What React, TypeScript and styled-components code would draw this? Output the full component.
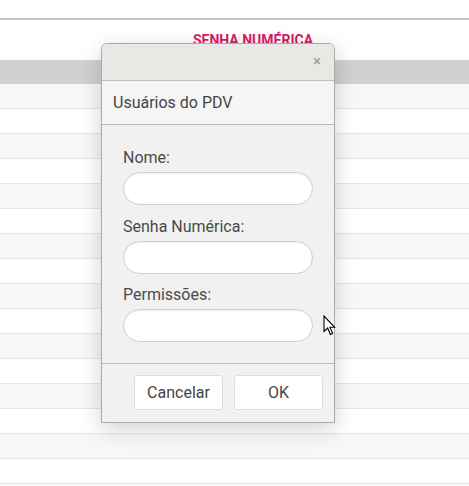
import React from "react";
import styled, { createGlobalStyle } from "styled-components";

const GlobalStyle = createGlobalStyle`
  html, body {
    margin: 0;
    padding: 0;
    background: #ffffff;
    font-family: Roboto, "Liberation Sans", Arial, sans-serif;
  }
  * { box-sizing: border-box; }
`;

const rows = Array.from({ length: 17 }, (_, i) => i);

const App = () => {
  return (
    <Page>
      <GlobalStyle />
      <TopSpace />
      <HeaderRow>
        <HeaderCell>Senha Numérica</HeaderCell>
      </HeaderRow>
      <GrayBar />
      {rows.map((i) => (
        <Row key={i} odd={i % 2 === 0} />
      ))}

      <Dialog>
        <TitleBar>
          <Close>×</Close>
        </TitleBar>
        <Section>Usuários do PDV</Section>
        <Content>
          <Field>
            <Label>Nome:</Label>
            <Input />
          </Field>
          <Field>
            <Label>Senha Numérica:</Label>
            <Input />
          </Field>
          <Field>
            <Label>Permissões:</Label>
            <Input />
          </Field>
        </Content>
        <Footer>
          <Button>Cancelar</Button>
          <Button>OK</Button>
        </Footer>
      </Dialog>

      <Cursor width="14" height="21" viewBox="0 0 14 21">
        <path
          d="M1 1 L1 16.5 L4.6 13 L7.4 19.4 L9.6 18.4 L6.9 12.2 L11.6 12.2 Z"
          fill="#ffffff"
          stroke="#000000"
          strokeWidth="1.1"
          strokeLinejoin="miter"
        />
      </Cursor>
    </Page>
  );
};

export default App;

const Page = styled.div`
  position: relative;
  width: 469px;
  height: 486px;
  overflow: hidden;
  background: #ffffff;
`;
const TopSpace = styled.div`
  height: 20px;
  border-bottom: 2px solid #c8c8c8;
`;
const HeaderRow = styled.div`
  height: 40px;
  display: flex;
  align-items: flex-start;
  padding-left: 192px;
  padding-top: 12px;
`;
const HeaderCell = styled.div`
  width: 122px;
  text-align: center;
  font-size: 14px;
  font-weight: 700;
  text-transform: uppercase;
  color: #d81b67;
  white-space: nowrap;
`;
const GrayBar = styled.div`
  height: 24px;
  background: #d0d0d0;
`;
const Row = styled.div<{ odd?: boolean }>`
  height: 25px;
  background: ${(p) => (p.odd ? "#f7f7f7" : "#ffffff")};
  border-bottom: 1px solid #e6e6e6;
`;
const Dialog = styled.div`
  position: absolute;
  left: 101px;
  top: 43px;
  width: 234px;
  height: 380px;
  display: flex;
  flex-direction: column;
  border: 1px solid #aaaaaa;
  border-radius: 6px 6px 0 0;
  background: #f1f1f1;
  box-shadow: 0 6px 22px rgba(0, 0, 0, 0.18);
  overflow: hidden;
`;
const TitleBar = styled.div`
  height: 37px;
  flex: none;
  background: #e8e8e4;
  border-bottom: 1px solid #bdbdbd;
  display: flex;
  justify-content: flex-end;
  align-items: center;
  padding-right: 13px;
`;
const Close = styled.span`
  font-size: 15px;
  color: #999999;
  line-height: 1;
  margin-top: -1px;
`;
const Section = styled.div`
  height: 44px;
  flex: none;
  background: #f5f5f5;
  border-bottom: 1px solid #b8b8b8;
  display: flex;
  align-items: center;
  padding-left: 11px;
  font-size: 16px;
  color: #444444;
`;
const Content = styled.div`
  flex: none;
  height: 239px;
  background: #f1f1f1;
  border-bottom: 1px solid #bdbdbd;
  padding: 23px 20px 0 21px;
  display: flex;
  flex-direction: column;
  gap: 11.5px;
`;
const Field = styled.div`
  display: flex;
  flex-direction: column;
  gap: 4px;
`;
const Label = styled.label`
  font-size: 16px;
  line-height: 20px;
  color: #4a4a4a;
`;
const Input = styled.div`
  width: 190px;
  height: 33px;
  background: #ffffff;
  border: 1px solid #cfcfcf;
  border-radius: 17px;
  box-shadow: inset 0 1px 2px rgba(0, 0, 0, 0.06);
`;
const Footer = styled.div`
  flex: 1;
  background: #f1f1f1;
  display: flex;
  justify-content: flex-end;
  align-items: flex-start;
  gap: 11px;
  padding: 11px 11px 0 0;
`;
const Button = styled.button`
  width: 89px;
  height: 35px;
  background: #ffffff;
  border: 1px solid #dddddd;
  border-radius: 3px;
  font-family: Roboto, "Liberation Sans", Arial, sans-serif;
  font-size: 16px;
  color: #444444;
  padding: 0;
`;
const Cursor = styled.svg`
  position: absolute;
  left: 323px;
  top: 315px;
`;
